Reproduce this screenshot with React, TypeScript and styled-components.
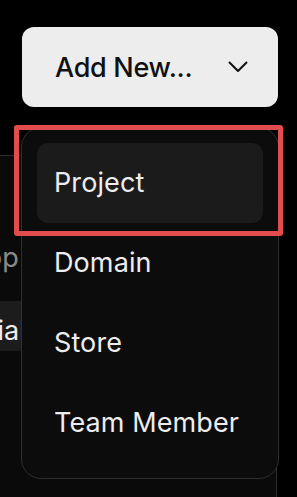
import React from "react";
import styled, { createGlobalStyle } from "styled-components";

const Global = createGlobalStyle`
  html, body { margin: 0; padding: 0; background: #000; }
  body { font-family: Inter, "Noto Sans", sans-serif; overflow: hidden; }
  * { box-sizing: border-box; }
`;

const Page = styled.div`
  position: relative;
  width: 297px;
  height: 497px;
  overflow: hidden;
  background: #000;
`;

const Header = styled.div`
  display: flex;
  padding: 27px 0 0 22px;
`;

const AddButton = styled.button`
  display: flex;
  align-items: center;
  justify-content: space-between;
  width: 256px;
  height: 80px;
  padding: 0 30px 0 33px;
  border: none;
  border-radius: 12px;
  background: #ededed;
  color: #111;
  font-family: Inter, sans-serif;
  font-size: 27px;
  font-weight: 500;
  letter-spacing: -0.3px;
`;

const Panel = styled.div`
  margin: 48px 0 0 -200px;
  width: 477px;
  height: 400px;
  border-top: 1px solid #2c2c2c;
  border-right: 1px solid #2c2c2c;
  background: #0a0a0a;
  padding-top: 72px;
  display: flex;
  flex-direction: column;
  gap: 23px;
`;

const PanelRow = styled.div<{ $active?: boolean }>`
  height: 50px;
  padding-top: 17px;
  background: ${(p) => (p.$active ? "#1c1c1c" : "transparent")};
  color: ${(p) => (p.$active ? "#ededed" : "#8a8a8a")};
  font-size: 27px;
  line-height: 26px;
  letter-spacing: 0.1px;
`;

const PanelLabel = styled.div<{ $end: number }>`
  width: ${(p) => p.$end}px;
  text-align: right;
  white-space: nowrap;
`;

const Menu = styled.div`
  position: absolute;
  top: 127px;
  left: 21px;
  width: 258px;
  height: 352px;
  padding: 15px;
  border: 1px solid #2e2e2e;
  border-radius: 20px;
  background: #0c0c0c;
  display: flex;
  flex-direction: column;
`;

const MenuItem = styled.div<{ $active?: boolean }>`
  height: 80px;
  padding-left: 17px;
  border-radius: 11px;
  background: ${(p) => (p.$active ? "#1b1b1b" : "transparent")};
  color: #ededed;
  font-size: 27px;
  letter-spacing: 0.1px;
  line-height: 80px;
  white-space: nowrap;
`;

const Highlight = styled.div`
  position: absolute;
  top: 125px;
  left: 14px;
  width: 269px;
  height: 111px;
  border: 5px solid #e34c4c;
  border-radius: 3px;
  pointer-events: none;
`;

const Chevron = () => (
  <svg width="20" height="12" viewBox="0 0 20 12" fill="none">
    <polyline
      points="1.5,1.5 10,10 18.5,1.5"
      stroke="#111"
      strokeWidth="2"
      strokeLinecap="round"
      strokeLinejoin="round"
    />
  </svg>
);

export default function App() {
  return (
    <Page>
      <Global />
      <Header>
        <AddButton>
          <span>Add New...</span>
          <Chevron />
        </AddButton>
      </Header>
      <Panel>
        <PanelRow>
          <PanelLabel $end={219}>Desktop</PanelLabel>
        </PanelRow>
        <PanelRow $active>
          <PanelLabel $end={226}>Tutorial</PanelLabel>
        </PanelRow>
      </Panel>
      <Menu>
        <MenuItem $active>Project</MenuItem>
        <MenuItem>Domain</MenuItem>
        <MenuItem>Store</MenuItem>
        <MenuItem>Team Member</MenuItem>
      </Menu>
      <Highlight />
    </Page>
  );
}
